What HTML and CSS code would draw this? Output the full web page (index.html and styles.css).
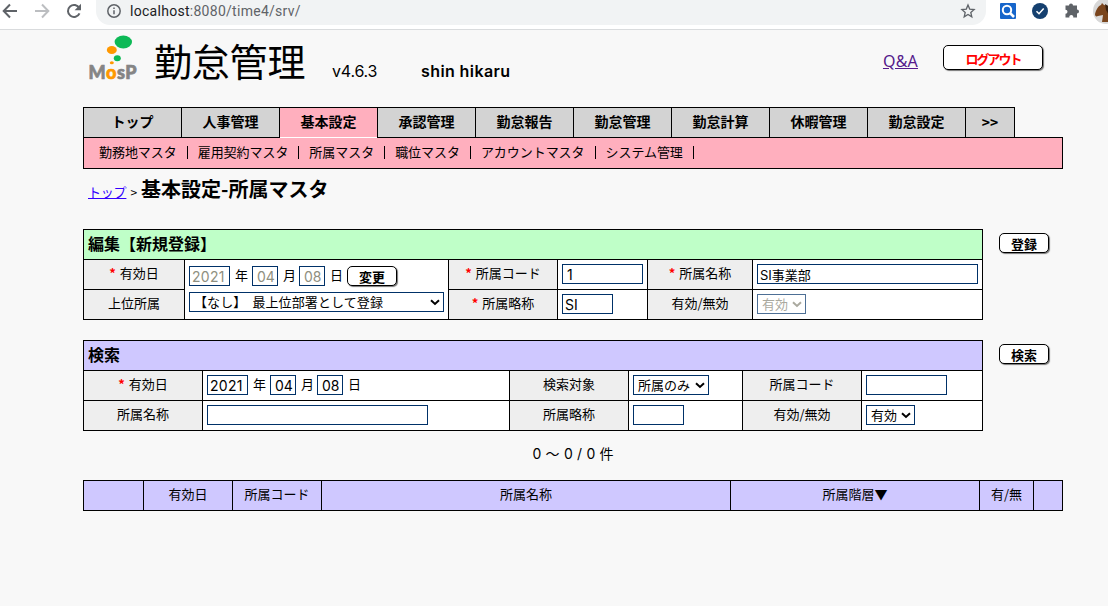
FILE: index.html
```html
<!DOCTYPE html>
<html lang="ja">
<head>
<meta charset="utf-8">
<title>勤怠管理</title>
<link rel="stylesheet" href="styles.css">
</head>
<body>
<div class="browser">
  <svg class="nav-icons" width="96" height="29" viewBox="0 0 96 29" fill="none" stroke-width="2">
    <path d="M17 11H4M10 4.5 3.7 11l6.3 6.500" stroke="#5f6368"/>
    <path d="M35 11h13M42 4.500 48.300 11 42 17.500" stroke="#bcbec1"/>
    <path d="M79.300 8.200A6 6 0 1 0 79.500 13.300" stroke="#5f6368"/>
    <path d="M81 3.800v6.400h-6.400z" fill="#5f6368"/>
  </svg>
  <div class="address">
    <svg width="16" height="16" viewBox="0 0 16 16" fill="none" stroke="#5f6368" stroke-width="1.500"><circle cx="8" cy="8" r="6.200"/><path d="M8 7.200v4M8 4.500v1.600"/></svg>
    <span class="url"><b>localhost</b>:8080/time4/srv/</span>
    <svg class="star" width="16" height="16" viewBox="0 0 16 16" fill="none" stroke="#5f6368" stroke-width="1.300"><path d="m8 2 1.700 4.100 4.400.4-3.300 2.900 1 4.400L8 11.500l-3.800 2.300 1-4.400-3.300-2.900 4.400-.4z"/></svg>
  </div>
  <svg class="extensions" width="122" height="29" viewBox="0 0 122 29">
    <rect x="14" y="3" width="16" height="16" rx="1" fill="#1766cb"/>
    <circle cx="21" cy="10" r="4.200" fill="#1766cb" stroke="#fff" stroke-width="2"/><path d="m24 13 4 4" stroke="#fff" stroke-width="2.500"/>
    <circle cx="54" cy="11" r="8" fill="#15406f"/><path d="m50.500 11.200 2.500 2.500 4.700-5.300" fill="none" stroke="#fff" stroke-width="1.500"/>
    <path d="M73 6h3.500a2 2 0 1 1 4 0h4v4a2 2 0 1 1 0 4v4h-3.800a2 2 0 1 0-3.800 0H73v-3.800a2 2 0 1 0 0-4z" transform="translate(6.500 -.5)" fill="#5f6368"/>
    <circle cx="120" cy="11" r="13" fill="#d8d8d8"/>
    <path d="M109 14c1-4 3-8 6-9l1-2 2 2c3 0 5 3 6 7v10h-8l1-7-5 1c-2 1-3 0-3-2z" fill="#7a451d"/>
    <path d="m119 4 5 3v10l-4-7z" fill="#38200f"/>
  </svg>
</div>

<main class="page">
  <header class="header">
    <svg class="logo" width="54" height="50" viewBox="0 0 54 50">
      <ellipse cx="35.300" cy="9" rx="8.700" ry="6.500" fill="#0db956"/>
      <ellipse cx="23.800" cy="17" rx="5" ry="4" fill="#ff9800"/>
      <ellipse cx="29.300" cy="25.300" rx="3.500" ry="3" fill="#0db956"/>
      <ellipse cx="23.800" cy="29.800" rx="2" ry="1.500" fill="#ff9800"/>
      <text class="logo-text" x="0.500" y="45.500" textLength="48"><tspan>M</tspan><tspan class="logo-o">o</tspan><tspan>sP</tspan></text>
    </svg>
    <h1 class="app-title">勤怠管理</h1>
    <span class="version">v4.6.3</span>
    <span class="user">shin hikaru</span>
    <a class="qa" href="#">Q&amp;A</a>
    <button class="btn logout">ログアウト</button>
  </header>

  <nav class="tabs">
    <a>トップ</a><a>人事管理</a><a class="active">基本設定</a><a>承認管理</a><a>勤怠報告</a><a>勤怠管理</a><a>勤怠計算</a><a>休暇管理</a><a>勤怠設定</a><a>&gt;&gt;</a>
  </nav>
  <nav class="submenu">
    <a>勤務地マスタ</a><a>雇用契約マスタ</a><a>所属マスタ</a><a>職位マスタ</a><a>アカウントマスタ</a><a>システム管理</a>
  </nav>

  <div class="crumbs"><a href="#">トップ</a><span class="gt">&gt;</span><h2>基本設定-所属マスタ</h2></div>

  <section class="section edit-section">
    <div class="grid edit">
      <div class="title">編集【新規登録】</div>
      <div class="label"><i>*</i>有効日</div>
      <div class="field parent">
        <div class="date disabled">
          <input class="year" value="2021" disabled><span>年</span><input class="two" value="04" disabled><span>月</span><input class="two" value="08" disabled><span>日</span>
          <button class="btn change">変更</button>
        </div>
        <div class="pick wide"><select><option>【なし】 最上位部署として登録</option></select><svg width="10" height="7" viewBox="0 0 10 7"><path d="m1 1.300 4 3.700 4-3.700"/></svg></div>
      </div>
      <div class="label"><i>*</i>所属コード</div>
      <div class="field"><input class="code" value="1"></div>
      <div class="label"><i>*</i>所属名称</div>
      <div class="field"><input class="name" value="SI事業部"></div>
      <div class="label">上位所属</div>
      <div class="label"><i>*</i>所属略称</div>
      <div class="field"><input class="abbr" value="SI"></div>
      <div class="label">有効/無効</div>
      <div class="field"><div class="pick state off"><select disabled><option>有効</option></select><svg width="10" height="7" viewBox="0 0 10 7"><path d="m1 1.300 4 3.700 4-3.700"/></svg></div></div>
    </div>
    <button class="btn action">登録</button>
  </section>

  <section class="section">
    <div class="grid search">
      <div class="title">検索</div>
      <div class="label"><i>*</i>有効日</div>
      <div class="field"><div class="date"><input class="year" value="2021"><span>年</span><input class="two" value="04"><span>月</span><input class="two" value="08"><span>日</span></div></div>
      <div class="label">検索対象</div>
      <div class="field"><div class="pick target"><select><option>所属のみ</option></select><svg width="10" height="7" viewBox="0 0 10 7"><path d="m1 1.300 4 3.700 4-3.700"/></svg></div></div>
      <div class="label">所属コード</div>
      <div class="field"><input class="code"></div>
      <div class="label">所属名称</div>
      <div class="field"><input class="name"></div>
      <div class="label">所属略称</div>
      <div class="field"><input class="abbr"></div>
      <div class="label">有効/無効</div>
      <div class="field"><div class="pick state"><select><option>有効</option></select><svg width="10" height="7" viewBox="0 0 10 7"><path d="m1 1.300 4 3.700 4-3.700"/></svg></div></div>
    </div>
    <button class="btn action">検索</button>
  </section>

  <div class="count">0 ～ 0 / 0 件</div>

  <div class="grid results">
    <div></div><div>有効日</div><div>所属コード</div><div>所属名称</div><div>所属階層▼</div><div>有/無</div><div></div>
  </div>
</main>
</body>
</html>
```

FILE: styles.css
```css
* { box-sizing: border-box; }
body {
  margin: 0;
  height: 606px;
  overflow: hidden;
  background: #f8f8f8;
  color: #000;
  font: 13px/19px "Noto Sans CJK JP", sans-serif;
}

/* Browser toolbar */
.browser {
  display: flex;
  height: 30px;
  background: #fff;
  border-bottom: 1px solid #d9dbdd;
}
.nav-icons, .extensions { flex: none; }
.address {
  display: flex;
  flex: none;
  width: 890px;
  height: 25px;
  padding: 3px 10px 0;
  background: #f1f3f4;
  border-radius: 0 0 14px 14px;
}
.url {
  margin-left: 8px;
  color: #5f6368;
  font: 14px/17px Roboto, sans-serif;
  letter-spacing: .28px;
}
.url b { color: #202124; font-weight: 400; }
.star { margin-left: auto; }

.page { width: 980px; margin-left: 83px; }

/* Header */
.header { display: flex; height: 77px; }
.logo { flex: none; margin: 3px 0 0 5px; }
.logo-text {
  font: 900 18px Lato, sans-serif;
  fill: #858585;
  stroke: #858585;
  stroke-width: .7px;
}
.logo-o { fill: #ff9800; stroke: #ff9800; }
.app-title {
  margin: 8px 0 0 12px;
  width: 178px;
  font-size: 38px;
  font-weight: 400;
  line-height: 44px;
  letter-spacing: -.2px;
  white-space: nowrap;
}
.version {
  width: 89px;
  margin-top: 31px;
  font: 16px/20px Inter, sans-serif;
  letter-spacing: -.2px;
}
.user { margin-top: 31px; font: 600 16px/20px Inter, sans-serif; letter-spacing: .4px; }
.qa {
  margin: 21px 25px 0 auto;
  color: #551a8b;
  font: 16px/20px "Noto Sans", sans-serif;
  letter-spacing: .2px;
}
.btn {
  width: 50px;
  height: 20px;
  padding: 1px 0 0;
  background: #fff;
  border: 1px solid #000;
  border-radius: 5px;
  box-shadow: 1px 1px 1px #777;
  color: #000;
  font: 700 13px/17px "Noto Sans CJK JP", sans-serif;
}
.logout {
  width: 100px;
  height: 25px;
  margin: 15px 20px 0 0;
  color: #f00;
  letter-spacing: -2px;
}

/* Menu */
.tabs { display: flex; height: 30px; }
.tabs a {
  width: 98px;
  background: #d3d3d3;
  border: solid #000;
  border-width: 1px 0 0 1px;
  font-size: 14px;
  font-weight: 700;
  line-height: 26px;
  text-align: center;
}
.tabs a:last-child { width: 50px; border-right-width: 1px; line-height: 29px; }
.tabs .active {
  position: relative;
  height: 31px;
  background: #ffafbe;
}
.tabs .active::after {
  content: "";
  position: absolute;
  bottom: 0;
  left: 0;
  width: 97px;
  height: 1px;
  background: #fff;
}
.submenu {
  display: flex;
  align-items: flex-start;
  height: 32px;
  padding: 8px 0 0 15px;
  background: #ffafbe;
  border: 1px solid #000;
}
.submenu a {
  height: 13px;
  margin-right: 10px;
  padding-right: 10px;
  border-right: 1px solid #000;
  line-height: 11px;
  letter-spacing: -.05px;
}

/* Breadcrumbs */
.crumbs {
  display: flex;
  align-items: baseline;
  height: 60px;
  padding: 6px 0 0 5px;
}
.crumbs a { color: #30f; letter-spacing: -.2px; }
.gt { margin: 0 4px; font-size: 12px; }
.crumbs h2 { margin: 0; font-size: 20px; line-height: 27px; }

/* Form sections */
.section { display: flex; align-items: flex-start; gap: 16px; margin-bottom: 20px; }
.action { margin-top: 4px; }
.grid {
  display: grid;
  gap: 1px;
  flex: none;
  background: #000;
  border: 1px solid #000;
  text-align: center;
}
.edit, .search { width: 900px; grid-template-rows: 29px 29px 29px; }
.edit { grid-template-columns: 100px 263px 108px 89px 104px 229px; }
.search { grid-template-columns: 118px 306px 118px 113px 118px 120px; }
.title {
  grid-column: 1 / -1;
  padding-left: 4px;
  background: #bfffc8;
  font-size: 16px;
  font-weight: 700;
  line-height: 26px;
  text-align: left;
}
.search .title { background: #cfc8ff; }
.label { background: #eee; line-height: 25px; }
.label i { margin-right: 4px; color: #f00; font-style: normal; font-weight: 700; }
.field { padding: 4px; background: #fff; text-align: left; }
.parent { grid-row: 2 / 4; grid-column: 2; padding-top: 6px; }
input, select {
  display: block;
  height: 20px;
  margin: 0;
  padding: 0 3px;
  background: #fff;
  border: 1px solid #003168;
  border-radius: 0;
  color: #000;
  font: 13px/18px "Noto Sans CJK JP", sans-serif;
}
input { padding: 0 2px; font: 14px/18px Inter, "Noto Sans CJK JP", sans-serif; }
.name { width: 221px; font-size: 13px; }
.code { width: 81px; padding-left: 4px; }
.abbr { width: 51px; }
.date { display: flex; height: 20px; }
.date input { padding: 0 0 0 2px; }
.date .year { width: 41px; letter-spacing: .3px; }
.date .two { width: 26px; padding-left: 4px; letter-spacing: -.1px; }
.date span { width: 22px; padding-left: 5px; line-height: 17px; }
.date span:nth-of-type(2) { width: 21px; }
.date input:disabled { color: #8f8f80; }
.pick { position: relative; height: 20px; }
.pick select { width: 100%; padding-left: 4px; appearance: none; opacity: 1; }
.pick svg {
  position: absolute;
  right: 4px;
  top: 7px;
  fill: none;
  stroke: #000;
  stroke-width: 2;
  pointer-events: none;
}
.wide { width: 255px; margin-top: 6px; }
.wide select { word-spacing: 3px; letter-spacing: .1px; }
.target { width: 76px; }
.state { width: 49px; }
.off select { color: #aaa99f; border-color: #4d6f95; }
.off svg { stroke: #aaa99f; }

/* Results */
.count {
  width: 980px;
  height: 36px;
  margin-top: -7px;
  font: 14px/20px Inter, "Noto Sans CJK JP", sans-serif;
  word-spacing: .4px;
  text-align: center;
}
.results {
  width: 980px;
  grid-template-columns: 59px 88px 88px 408px 248px 53px 28px;
  grid-template-rows: 29px;
}
.results div { background: #cfc8ff; line-height: 26px; }
```
